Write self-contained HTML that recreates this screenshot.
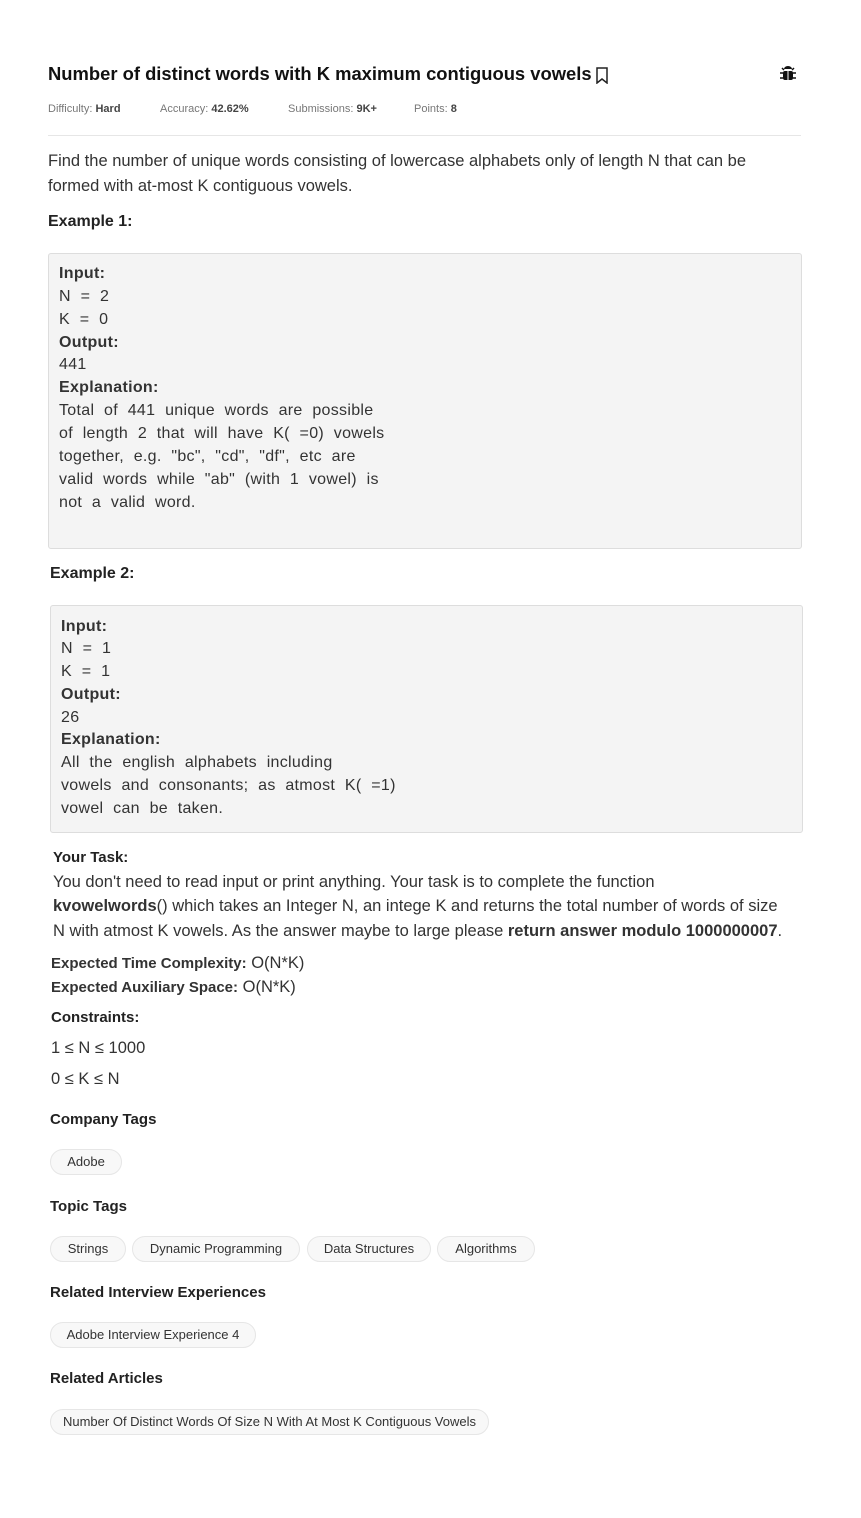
<!DOCTYPE html>
<html><head><meta charset="utf-8"><style>
body{margin:0;width:861px;height:1518px;background:#fff;position:relative;font-family:"Liberation Sans",sans-serif;color:#222;overflow:hidden}
.l{position:absolute;white-space:nowrap;line-height:20px}
.b{font-weight:bold}
.meta{font-size:11px;color:#777}
.meta b{color:#444}
.box{position:absolute;background:#f4f4f4;border:1px solid #ddd;border-radius:3px}
.bx{font-size:16px;word-spacing:5px;letter-spacing:0.3px;color:#333}
.h{font-size:15px;font-weight:bold;color:#222}
.pill{position:absolute;height:24px;border:1px solid #e6e6e6;background:#f8f8f8;border-radius:13px;font-size:13px;color:#333;line-height:24px;text-align:center}
.tx{font-size:16.5px;color:#333}
</style></head><body>
<div class="l b" style="left:48px;top:64px;font-size:18.4px;color:#111">Number of distinct words with K maximum contiguous vowels</div>
<svg style="position:absolute;left:595px;top:67px" width="14" height="17" viewBox="0 0 14 17"><path d="M2 1h10v15l-5-4-5 4z" fill="none" stroke="#222" stroke-width="1.5"/></svg>
<svg style="position:absolute;left:779px;top:64px" width="18" height="18" viewBox="0 0 18 18"><path d="M5 5a4 3 0 0 1 8 0z" fill="#111"/><rect x="4" y="7" width="10" height="9" rx="2" fill="#111"/><path d="M1 9h3M14 9h3M1 14h3M14 14h3M3 4l2 2M15 4l-2 2" stroke="#111" stroke-width="1.5"/><path d="M9 7v9" stroke="#fff" stroke-width="1"/></svg>
<div class="l meta" style="left:48px;top:99px">Difficulty: <b>Hard</b></div>
<div class="l meta" style="left:160px;top:99px">Accuracy: <b>42.62%</b></div>
<div class="l meta" style="left:288px;top:99px">Submissions: <b>9K+</b></div>
<div class="l meta" style="left:414px;top:99px">Points: <b>8</b></div>
<div style="position:absolute;left:48px;top:135px;width:753px;height:1px;background:#e6e6e6"></div>
<div class="l tx" style="left:48px;top:151px">Find the number of unique words consisting of lowercase alphabets only of length N that can be</div>
<div class="l tx" style="left:48px;top:176px">formed with at-most K contiguous vowels.</div>
<div class="l b" style="left:48px;top:212px;font-size:16px">Example 1:</div>
<div class="box" style="left:48px;top:253px;width:752px;height:294px"></div>
<div class="l bx b" style="left:59px;top:264px">Input:</div>
<div class="l bx" style="left:59px;top:287px">N = 2</div>
<div class="l bx" style="left:59px;top:310px">K = 0</div>
<div class="l bx b" style="left:59px;top:333px">Output:</div>
<div class="l bx" style="left:59px;top:355px">441</div>
<div class="l bx b" style="left:59px;top:378px">Explanation:</div>
<div class="l bx" style="left:59px;top:401px">Total of 441 unique words are possible</div>
<div class="l bx" style="left:59px;top:424px">of length 2 that will have K( =0) vowels</div>
<div class="l bx" style="left:59px;top:447px">together, e.g. "bc", "cd", "df", etc are</div>
<div class="l bx" style="left:59px;top:470px">valid words while "ab" (with 1 vowel) is</div>
<div class="l bx" style="left:59px;top:493px">not a valid word.</div>
<div class="l b" style="left:50px;top:564px;font-size:16px">Example 2:</div>
<div class="box" style="left:50px;top:605px;width:751px;height:226px"></div>
<div class="l bx b" style="left:61px;top:617px">Input:</div>
<div class="l bx" style="left:61px;top:639px">N = 1</div>
<div class="l bx" style="left:61px;top:662px">K = 1</div>
<div class="l bx b" style="left:61px;top:685px">Output:</div>
<div class="l bx" style="left:61px;top:708px">26</div>
<div class="l bx b" style="left:61px;top:730px">Explanation:</div>
<div class="l bx" style="left:61px;top:753px">All the english alphabets including</div>
<div class="l bx" style="left:61px;top:776px">vowels and consonants; as atmost K( =1)</div>
<div class="l bx" style="left:61px;top:799px">vowel can be taken.</div>
<div class="l b" style="left:53px;top:848px;font-size:15px">Your Task:</div>
<div class="l tx" style="left:53px;top:872px">You don't need to read input or print anything. Your task is to complete the function</div>
<div class="l tx" style="left:53px;top:896px"><b>kvowelwords</b>() which takes an Integer N, an intege K and returns the total number of words of size</div>
<div class="l tx" style="left:53px;top:921px">N with atmost K vowels. As the answer maybe to large please <b>return answer modulo 1000000007</b>.</div>
<div class="l tx" style="left:51px;top:953px"><b style="font-size:15px">Expected Time Complexity:</b> O(N*K)</div>
<div class="l tx" style="left:51px;top:977px"><b style="font-size:15px">Expected Auxiliary Space:</b> O(N*K)</div>
<div class="l b" style="left:51px;top:1008px;font-size:15px">Constraints:</div>
<div class="l tx" style="left:51px;top:1038px">1 ≤ N ≤ 1000</div>
<div class="l tx" style="left:51px;top:1069px">0 ≤ K ≤ N</div>
<div class="l h" style="left:50px;top:1110px">Company Tags</div>
<div class="pill" style="left:50px;top:1149px;width:70px">Adobe</div>
<div class="l h" style="left:50px;top:1197px">Topic Tags</div>
<div class="pill" style="left:50px;top:1236px;width:74px">Strings</div>
<div class="pill" style="left:132px;top:1236px;width:166px">Dynamic Programming</div>
<div class="pill" style="left:307px;top:1236px;width:122px">Data Structures</div>
<div class="pill" style="left:437px;top:1236px;width:96px">Algorithms</div>
<div class="l h" style="left:50px;top:1283px">Related Interview Experiences</div>
<div class="pill" style="left:50px;top:1322px;width:204px">Adobe Interview Experience 4</div>
<div class="l h" style="left:50px;top:1369px">Related Articles</div>
<div class="pill" style="left:50px;top:1409px;width:437px">Number Of Distinct Words Of Size N With At Most K Contiguous Vowels</div>
</body></html>
